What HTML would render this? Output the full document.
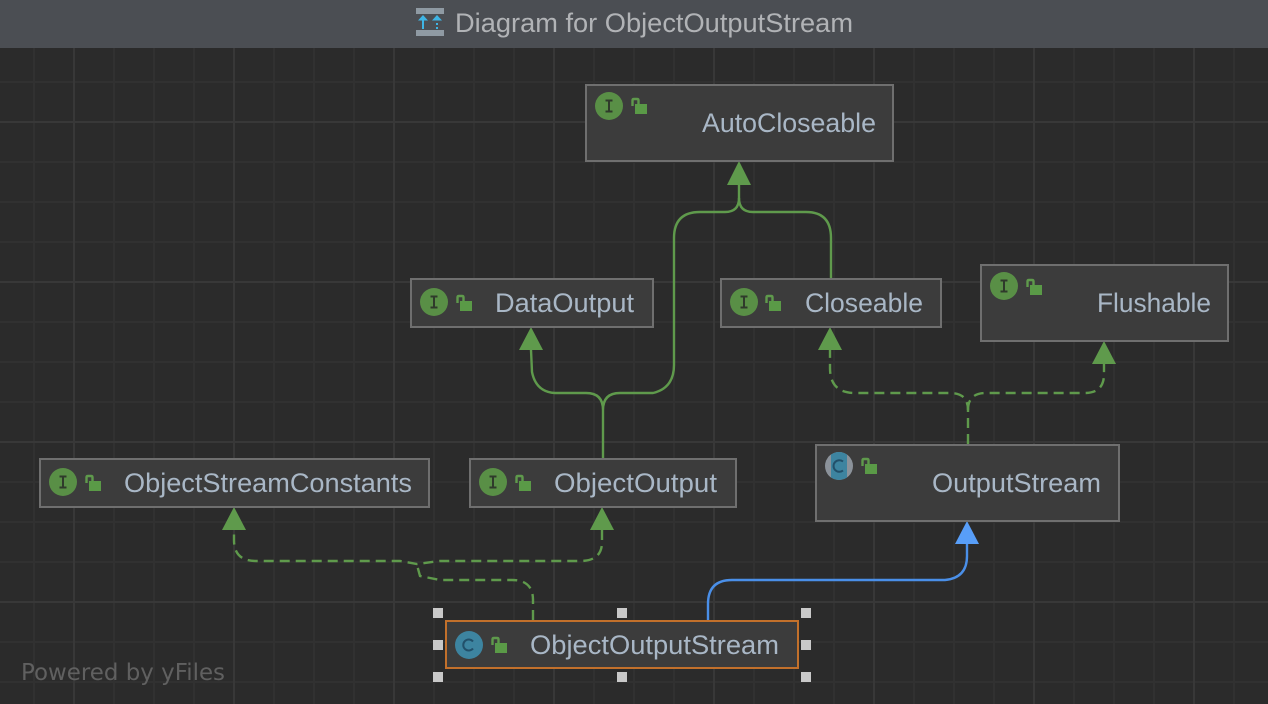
<!DOCTYPE html>
<html><head><meta charset="utf-8">
<style>
html,body{margin:0;padding:0;background:#2b2b2b;width:1268px;height:704px;overflow:hidden}
svg{display:block}
text{font-family:"Liberation Sans",sans-serif}
.n{font-size:26.5px;fill:#a9b7c6}
.b{fill:#3c3c3c;stroke:#6f6f6f;stroke-width:2}
.e{fill:none;stroke:#5f9a4c;stroke-width:2.4}
.d{stroke-dasharray:10 6}
.h{fill:#c9c9c9}
</style></head><body>
<svg width="1268" height="704" viewBox="0 0 1268 704" xmlns="http://www.w3.org/2000/svg">
<defs>
<g id="lock">
<path d="M1.500 8V2.500Q1.500 1 3 1H6Q7.500 1 7.500 2.500V6" fill="none" stroke="#5f9a4c" stroke-width="2.400"/>
<rect x="4" y="6" width="12" height="10" fill="#5a9a47"/>
</g>
<g id="iI"><circle cx="14" cy="14" r="14" fill="#598f46"/><path d="M10.500 8.500H17.500M14 8.500V19.500M10.500 19.500H17.500" stroke="#2f3a2b" stroke-width="2" fill="none"/></g>
<g id="iC"><circle cx="14" cy="14" r="14" fill="#3d84a0"/><path d="M18 10.500A5.500 5.500 0 1 0 18 17.500" stroke="#22506a" stroke-width="2" fill="none"/></g>
<clipPath id="cb"><circle cx="839" cy="466" r="14"/></clipPath>
</defs>
<rect width="1268" height="704" fill="#2b2b2b"/>
<g stroke="#313131" stroke-width="2">
<path d="M34 48V704M114 48V704M154 48V704M194 48V704M274 48V704M314 48V704M354 48V704M434 48V704M474 48V704M514 48V704M594 48V704M634 48V704M674 48V704M754 48V704M794 48V704M834 48V704M914 48V704M954 48V704M994 48V704M1074 48V704M1114 48V704M1154 48V704M1234 48V704"/>
<path d="M0 82H1268M0 162H1268M0 202H1268M0 242H1268M0 322H1268M0 362H1268M0 402H1268M0 482H1268M0 522H1268M0 562H1268M0 642H1268M0 682H1268"/>
</g>
<g stroke="#383838" stroke-width="2">
<path d="M74 48V704M234 48V704M394 48V704M554 48V704M714 48V704M874 48V704M1034 48V704M1194 48V704"/>
<path d="M0 122H1268M0 282H1268M0 442H1268M0 602H1268"/>
</g>
<rect width="1268" height="48" fill="#4b4e53"/>
<rect x="416" y="8" width="28" height="6" fill="#8f9aa3"/>
<rect x="416" y="30" width="28" height="6" fill="#8f9aa3"/>
<path d="M423 29V19" fill="none" stroke="#3fb5e5" stroke-width="2"/>
<path d="M423 15L428 20.500H418Z" fill="#3fb5e5"/>
<path d="M437 29V21" fill="none" stroke="#3fb5e5" stroke-width="2" stroke-dasharray="2 2"/>
<path d="M437 15L442 20.500H432Z" fill="#3fb5e5"/>
<text x="455" y="32" font-size="26.5" fill="#b1b3b6" textLength="398" lengthAdjust="spacingAndGlyphs">Diagram for ObjectOutputStream</text>
<text x="21" y="680" font-size="23" fill="#606060" textLength="204" lengthAdjust="spacingAndGlyphs" style="font-family:'DejaVu Sans',sans-serif">Powered by yFiles</text>

<path class="e" d="M739 185V198Q739 212 725 212H700Q674 212 674 238V365Q674 388 653 393H620Q603 393 603 410Q603 393 586 393H555Q536 392 532 372L531 350M603 410V458"/>
<path class="e" d="M739 198Q739 212 753 212H806Q831 212 831 238V278"/>
<path class="e d" d="M968 444V410Q968 393 950 393H855Q830 393 830 368V350"/>
<path class="e d" d="M968 410Q968 393 986 393H1085Q1104 393 1104 374V364"/>
<path class="e d" d="M533 620V600Q533 580 512 580H440L420 576L417 565"/>
<path class="e d" d="M602 530V542Q602 561 580 561H440L417 564L400 561H256Q234 561 234 540V530"/>
<path d="M708 620V604Q708 580 732 580H945Q967 578 967 556V544" fill="none" stroke="#4a8fe8" stroke-width="2.400"/>
<g fill="#5f9a4c">
<path d="M739 161L751 185H727Z"/>
<path d="M531 327L543 350H519Z"/>
<path d="M830 327L842 350H818Z"/>
<path d="M1104 341L1116 364H1092Z"/>
<path d="M234 507L246 530H222Z"/>
<path d="M602 507L614 530H590Z"/>
</g>
<path d="M967 521L979 544H955Z" fill="#589ef8"/>

<rect class="b" x="586" y="85" width="307" height="76"/>
<use href="#iI" x="595" y="92"/><use href="#lock" x="631" y="98"/>
<text class="n" x="702" y="132" textLength="174" lengthAdjust="spacingAndGlyphs">AutoCloseable</text>

<rect class="b" x="411" y="279" width="242" height="48"/>
<use href="#iI" x="420" y="288"/><use href="#lock" x="456" y="295"/>
<text class="n" x="495" y="312" textLength="139" lengthAdjust="spacingAndGlyphs">DataOutput</text>

<rect class="b" x="721" y="279" width="220" height="48"/>
<use href="#iI" x="730" y="288"/><use href="#lock" x="765" y="295"/>
<text class="n" x="805" y="312" textLength="118" lengthAdjust="spacingAndGlyphs">Closeable</text>

<rect class="b" x="981" y="265" width="247" height="76"/>
<use href="#iI" x="990" y="272"/><use href="#lock" x="1026" y="279"/>
<text class="n" x="1097" y="312" textLength="114" lengthAdjust="spacingAndGlyphs">Flushable</text>

<rect class="b" x="40" y="459" width="389" height="48"/>
<use href="#iI" x="49" y="468"/><use href="#lock" x="85" y="475"/>
<text class="n" x="124" y="492" textLength="288" lengthAdjust="spacingAndGlyphs">ObjectStreamConstants</text>

<rect class="b" x="470" y="459" width="266" height="48"/>
<use href="#iI" x="479" y="468"/><use href="#lock" x="515" y="475"/>
<text class="n" x="554" y="492" textLength="163" lengthAdjust="spacingAndGlyphs">ObjectOutput</text>

<rect class="b" x="816" y="445" width="303" height="76"/>
<g clip-path="url(#cb)">
<rect x="825" y="452" width="28" height="28" fill="#8b929a"/>
<rect x="828" y="452" width="3" height="28" fill="#8b929a"/>
<rect x="831" y="452" width="16" height="28" fill="#3d84a0"/>
</g>
<path d="M843 461.500A5.800 5.800 0 1 0 843 470.500" stroke="#22506a" stroke-width="2" fill="none"/>
<use href="#lock" x="861" y="458"/>
<text class="n" x="932" y="492" textLength="169" lengthAdjust="spacingAndGlyphs">OutputStream</text>

<rect x="446" y="621" width="352" height="47" fill="#3c3c3c" stroke="#c2702b" stroke-width="2"/>
<use href="#iC" x="455" y="631"/><use href="#lock" x="491" y="637"/>
<text class="n" x="530" y="654" textLength="249" lengthAdjust="spacingAndGlyphs">ObjectOutputStream</text>

<g class="h">
<rect x="433" y="608" width="10" height="10"/><rect x="617" y="608" width="10" height="10"/><rect x="801" y="608" width="10" height="10"/>
<rect x="433" y="640" width="10" height="10"/><rect x="801" y="640" width="10" height="10"/>
<rect x="433" y="672" width="10" height="10"/><rect x="617" y="672" width="10" height="10"/><rect x="801" y="672" width="10" height="10"/>
</g>
</svg>
</body></html>
